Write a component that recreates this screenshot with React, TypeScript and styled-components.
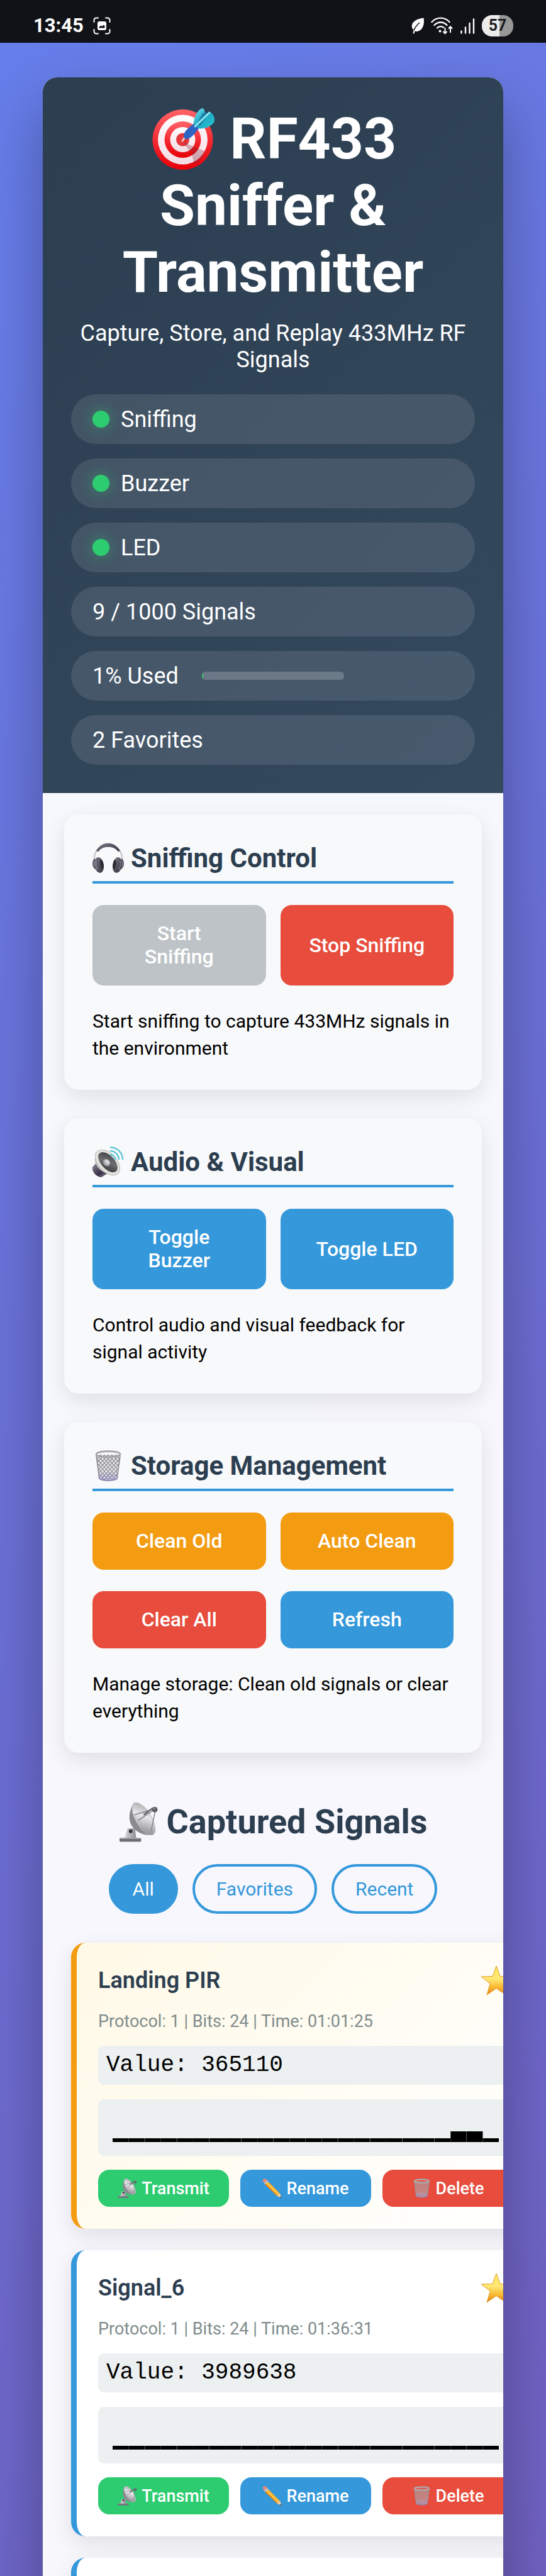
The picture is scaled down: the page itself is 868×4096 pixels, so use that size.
import React, { useId } from "react";
import styled, { createGlobalStyle } from "styled-components";

const GlobalStyle = createGlobalStyle`
  *, *::before, *::after { box-sizing: border-box; }
  body {
    margin: 0;
    font-family: Roboto, sans-serif;
    font-size: 36px;
    color: #000;
  }
  h1, h2, h3, p { margin: 0; }
  button { font-family: inherit; margin: 0; cursor: pointer; }
`;

const tones = {
  blue: "#3498db",
  red: "#e74c3c",
  green: "#2ecc71",
  orange: "#f39c12",
  muted: "#bdc3c7",
};
type Tone = keyof typeof tones;

/* ---------- screen and status bar ---------- */

const Screen = styled.div`
  height: 100vh;
  display: flex;
  flex-direction: column;
  overflow: hidden;
  background: #111217;
`;

const StatusBar = styled.header`
  flex: none;
  height: 68px;
  padding: 14px 52px 0 53px;
  display: flex;
  align-items: center;
  justify-content: space-between;
  color: #fff;
`;

const StatusGroup = styled.div<{ $gap: number }>`
  display: flex;
  align-items: center;
  gap: ${(p) => p.$gap}px;
`;

const Clock = styled.span`
  font-size: 31px;
  line-height: 36px;
  font-weight: 700;
`;

const Battery = styled.span`
  width: 50px;
  height: 34px;
  border-radius: 16px;
  background: linear-gradient(90deg, #ebebeb 57%, #979797 57%);
  color: #1c1c1e;
  font-size: 25px;
  line-height: 34px;
  font-weight: 700;
  text-align: center;
`;

const Scroller = styled.div`
  flex: 1;
  min-height: 0;
  overflow: hidden;
  padding: 55px 68px;
  background: linear-gradient(135deg, #667eea 0%, #764ba2 100%) 0 0 / 100% 7500px no-repeat;
`;

/* ---------- main card ---------- */

const Container = styled.main`
  border-radius: 23px;
  overflow: hidden;
  background: rgba(255, 255, 255, 0.95);
  box-shadow: 0 45px 90px rgba(0, 0, 0, 0.3);
`;

const Hero = styled.div`
  padding: 45px;
  background: linear-gradient(135deg, #2c3e50, #34495e);
  color: #fff;
  text-align: center;
`;

const HeroTitle = styled.h1`
  font-size: 91px;
  line-height: 106px;
  font-weight: 700;
  margin-bottom: 23px;

  svg { vertical-align: -20px; }
`;

const HeroText = styled.p`
  font-size: 36px;
  line-height: 42px;
  margin-bottom: 34px;
`;

const StatusList = styled.ul`
  list-style: none;
  margin: 0;
  padding: 0;
  display: flex;
  flex-direction: column;
  gap: 23px;
`;

const StatusItem = styled.li`
  height: 79px;
  padding: 0 34px;
  border-radius: 45px;
  display: flex;
  align-items: center;
  gap: 18px;
  font-size: 36px;
  line-height: 42px;
  background: rgba(255, 255, 255, 0.1);
`;

const Dot = styled.span`
  width: 27px;
  height: 27px;
  border-radius: 50%;
  background: ${tones.green};
  box-shadow: 0 0 23px rgba(46, 204, 113, 0.5);
`;

const Meter = styled.span`
  width: 226px;
  height: 13px;
  margin-left: 19px;
  border-radius: 6px;
  overflow: hidden;
  background: rgba(255, 255, 255, 0.2);
`;

const MeterFill = styled.span`
  display: block;
  height: 100%;
  background: ${tones.green};
`;

/* ---------- control panels ---------- */

const Panels = styled.div`
  padding: 34px;
  display: flex;
  flex-direction: column;
  gap: 45px;
`;

const Panel = styled.section`
  padding: 45px;
  border-radius: 23px;
  background: #f8f9fa;
  box-shadow: 0 11px 34px rgba(0, 0, 0, 0.1);
`;

const PanelTitle = styled.h2`
  display: flex;
  align-items: center;
  gap: 11px;
  padding-bottom: 11px;
  margin-bottom: 34px;
  border-bottom: 4px solid ${tones.blue};
  color: #2c3e50;
  font-size: 42px;
  line-height: 50px;
  font-weight: 700;
`;

const ButtonGrid = styled.div`
  display: grid;
  grid-template-columns: 1fr 1fr;
  gap: 34px 23px;
  margin-bottom: 35px;
`;

const ActionButton = styled.button<{ $tone: Tone }>`
  border: 0;
  border-radius: 18px;
  padding: 27px 45px;
  background: ${(p) => tones[p.$tone]};
  color: #fff;
  font-size: 32px;
  line-height: 37px;
  font-weight: 500;
`;

const PanelText = styled.p`
  font-size: 30px;
  line-height: 43px;
`;

/* ---------- captured signals ---------- */

const Signals = styled.section`
  padding: 44px 45px;
`;

const SignalsTitle = styled.h2`
  display: flex;
  align-items: center;
  justify-content: center;
  gap: 13px;
  color: #2c3e50;
  font-size: 54px;
  line-height: 64px;
  font-weight: 700;
  margin-bottom: 35px;
`;

const Filters = styled.div`
  display: flex;
  justify-content: center;
  gap: 23px;
  margin-bottom: 46px;
`;

const FilterButton = styled.button<{ $active?: boolean }>`
  padding: 18px 34px;
  border: 4px solid ${tones.blue};
  border-radius: 45px;
  background: ${(p) => (p.$active ? tones.blue : "transparent")};
  color: ${(p) => (p.$active ? "#fff" : tones.blue)};
  font-size: 30px;
  line-height: 35px;
`;

const SignalList = styled.div`
  display: grid;
  grid-template-columns: minmax(737px, 1fr);
  gap: 34px;
`;

const SignalCard = styled.article<{ $favorite?: boolean }>`
  min-height: 455px;
  padding: 34px;
  border-left: 9px solid ${(p) => (p.$favorite ? tones.orange : tones.blue)};
  border-radius: 23px;
  background: ${(p) => (p.$favorite ? "linear-gradient(135deg, #fff9e6, #fff)" : "#fff")};
  box-shadow: 0 11px 34px rgba(0, 0, 0, 0.1);
`;

const SignalHead = styled.div`
  height: 52px;
  display: flex;
  align-items: center;
  justify-content: space-between;
  margin-bottom: 23px;
`;

const SignalName = styled.h3`
  color: #2c3e50;
  font-size: 36px;
  line-height: 42px;
  font-weight: 600;
`;

const StarButton = styled.button`
  display: flex;
  padding: 0;
  border: 0;
  background: none;
`;

const SignalMeta = styled.p`
  color: #7f8c8d;
  font-size: 27px;
  line-height: 32px;
  margin-bottom: 23px;
`;

const SignalValue = styled.div`
  padding: 11px 13px;
  border-radius: 9px;
  background: #ecf0f1;
  font-family: "Liberation Mono", monospace;
  font-size: 36px;
  line-height: 40px;
  margin-bottom: 23px;
`;

const WaveBox = styled.div`
  display: flex;
  padding: 22px 23px;
  border-radius: 9px;
  background: #ecf0f1;
  margin-bottom: 22px;
`;

const SignalActions = styled.div`
  display: grid;
  grid-template-columns: repeat(3, 1fr);
  gap: 18px;
`;

const SmallButton = styled.button<{ $tone: Tone }>`
  display: flex;
  align-items: center;
  justify-content: center;
  gap: 7px;
  height: 59px;
  padding: 0;
  border: 0;
  border-radius: 18px;
  background: ${(p) => tones[p.$tone]};
  color: #fff;
  font-size: 27px;
  line-height: 32px;
  font-weight: 500;
`;

/* ---------- drawings ---------- */

const TargetIcon = () => {
  const id = useId();
  return (
    <svg width="105" height="102" viewBox="0 0 105 102" aria-hidden="true">
      <defs>
        <linearGradient id={id + "r"} x1="0" y1="0" x2="0" y2="1">
          <stop offset="0" stopColor="#ff6468" />
          <stop offset="0.55" stopColor="#f2262e" />
          <stop offset="1" stopColor="#e80008" />
        </linearGradient>
        <linearGradient id={id + "w"} x1="0" y1="0" x2="0" y2="1">
          <stop offset="0" stopColor="#fff" />
          <stop offset="1" stopColor="#f3dbe4" />
        </linearGradient>
        <linearGradient id={id + "f"} x1="0" y1="0" x2="1" y2="1">
          <stop offset="0" stopColor="#7be6ee" />
          <stop offset="0.5" stopColor="#1fa9c4" />
          <stop offset="1" stopColor="#2cc5d6" />
        </linearGradient>
      </defs>
      <circle cx="52.500" cy="52" r="48" fill={`url(#${id}r)`} />
      <circle cx="52.500" cy="52" r="39.500" fill={`url(#${id}w)`} />
      <circle cx="52.500" cy="52" r="29" fill={`url(#${id}r)`} />
      <circle cx="52.500" cy="52" r="20" fill={`url(#${id}w)`} />
      <circle cx="52.500" cy="52" r="10.500" fill="#e5383d" />
      <path d="M54 54 L62 60 L87 70 L84 81 L75 90 L70 91 L67 73 L56 61 Z" fill="#7a2230" opacity="0.3" />
      <path d="M52 54 L58 45" stroke="#f1c9cd" strokeWidth="3" strokeLinecap="round" />
      <path d="M69 34 C69 20 74 6 83 2 C88 2 88 9 87 15 L96 9 C101 9 105 20 102 25 C96 32 86 36 77 34 Z" fill={`url(#${id}f)`} />
      <path d="M84 10 L95 9 L80 30 L74 29 Z" fill="#1a7fa8" />
      <path d="M54 46 C54 40 60 34 70 27 L78 34 C72 42 67 49 60 51 C56 52 54 49 54 46 Z" fill="#2f63c4" />
      <path d="M72 31 L95 9" stroke="#8fe9f2" strokeWidth="3" strokeLinecap="round" />
    </svg>
  );
};

const HeadphonesIcon = () => {
  const id = useId();
  return (
    <svg width="50" height="50" viewBox="0 0 50 50" aria-hidden="true">
      <defs>
        <linearGradient id={id} x1="0" y1="0" x2="1" y2="1">
          <stop offset="0" stopColor="#83808f" />
          <stop offset="0.5" stopColor="#55525f" />
          <stop offset="1" stopColor="#3a3742" />
        </linearGradient>
      </defs>
      <path d="M8 11 C2 18 2 26 4 34 M42 11 C48 18 48 26 46 34" fill="none" stroke="#c9c9cd" strokeWidth="2.500" />
      <path d="M6.500 12.500 C15 -2.500 35 -2.500 43.500 12.500 L41 14 C34 3.500 16 3.500 9 14 Z" fill={`url(#${id})`} stroke="#615f6b" strokeWidth="1" />
      <path d="M4 26 C0 30 0 38 6 42 M46 26 C50 30 50 38 44 42" fill="none" stroke="#5c5966" strokeWidth="2.500" />
      <ellipse cx="10.500" cy="35.500" rx="7.500" ry="12.500" transform="rotate(-10 10.500 35.500)" fill={`url(#${id})`} />
      <ellipse cx="39.500" cy="35.500" rx="7.500" ry="12.500" transform="rotate(10 39.500 35.500)" fill={`url(#${id})`} />
      <ellipse cx="15" cy="34.500" rx="2.500" ry="7.500" transform="rotate(-7 15 34.500)" fill="#2c2a33" />
      <ellipse cx="35" cy="34.500" rx="2.500" ry="7.500" transform="rotate(7 35 34.500)" fill="#2c2a33" />
      <path d="M6 29 C5 33 6 39 8 43 M44 29 C45 33 44 39 42 43" fill="none" stroke="#9a97a6" strokeWidth="1.500" opacity="0.6" />
    </svg>
  );
};

const SpeakerIcon = () => {
  const id = useId();
  return (
    <svg width="50" height="50" viewBox="0 0 50 50" aria-hidden="true">
      <defs>
        <linearGradient id={id + "m"} x1="0" y1="0" x2="1" y2="1">
          <stop offset="0" stopColor="#8b8992" />
          <stop offset="0.6" stopColor="#3a2f49" />
          <stop offset="1" stopColor="#8d8b96" />
        </linearGradient>
        <linearGradient id={id + "c"} x1="0" y1="0" x2="1" y2="1">
          <stop offset="0" stopColor="#3a3a3d" />
          <stop offset="0.5" stopColor="#6f6f73" />
          <stop offset="1" stopColor="#2b2b2e" />
        </linearGradient>
      </defs>
      <path d="M5 27 L0 33 C-1 41 6 48 14 49 L24 43 Z" fill={`url(#${id}m)`} />
      <path d="M5 9 C3 19 3 27 9 34 C15 41 26 45 38 45 Z" fill="#b9b9bb" />
      <ellipse cx="24" cy="25.500" rx="24" ry="14.500" transform="rotate(47 24 25.500)" fill="#e3e3e1" stroke="#bcbcba" strokeWidth="1" />
      <ellipse cx="24.500" cy="25" rx="19.500" ry="10.500" transform="rotate(47 24.500 25)" fill={`url(#${id}c)`} />
      <ellipse cx="22.500" cy="25.500" rx="6" ry="5" transform="rotate(47 22.500 25.500)" fill="#a9a9ab" />
      <ellipse cx="23.500" cy="24.500" rx="4" ry="3" transform="rotate(47 23.500 24.500)" fill="#d5d5d6" />
      <g fill="none" stroke="#62c8d8" strokeWidth="2.500" strokeLinecap="round">
        <path d="M29 13 A 8 8 0 0 1 36 20" />
        <path d="M29 7 A 14 14 0 0 1 42 20" />
        <path d="M29 1.500 A 19 19 0 0 1 48 20" />
      </g>
    </svg>
  );
};

const TrashIcon = ({ size }: { size: number }) => {
  const id = useId();
  const steps = [-36, -30, -24, -18, -12, -6, 0, 6, 12, 18, 24, 30, 36, 42];
  return (
    <svg width={size} height={size} viewBox="0 0 50 50" aria-hidden="true">
      <defs>
        <clipPath id={id}>
          <path d="M6 7 L44 7 L39 45 C35 49 15 49 11 45 Z" />
        </clipPath>
        <linearGradient id={id + "g"} x1="0" y1="0" x2="0" y2="50" gradientUnits="userSpaceOnUse">
          <stop offset="0.1" stopColor="#8c8c90" />
          <stop offset="0.7" stopColor="#9a99a0" />
          <stop offset="1" stopColor="#8983b4" />
        </linearGradient>
      </defs>
      <path d="M6 7 L44 7 L39 45 C35 49 15 49 11 45 Z" fill="#dcdce4" opacity="0.3" />
      <path d="M10 38 C18 35 32 35 40 38 L39 45 C35 49 15 49 11 45 Z" fill="#b6b2d6" opacity="0.4" />
      <g clipPath={`url(#${id})`} stroke={`url(#${id}g)`} strokeWidth="1.500" fill="none">
        {steps.map((x) => (
          <path key={x} d={`M${x} 6 L${x + 40} 50 M${x + 44} 6 L${x + 4} 50`} />
        ))}
      </g>
      <path d="M6 7 L11 45 C15 49 35 49 39 45 L44 7" fill="none" stroke={`url(#${id}g)`} strokeWidth="2" />
      <ellipse cx="25" cy="6.500" rx="19" ry="4.500" fill="none" stroke="#c4c4c8" strokeWidth="3" />
      <ellipse cx="25" cy="6" rx="19.500" ry="5" fill="none" stroke="#77777c" strokeWidth="1" />
    </svg>
  );
};

const DishIcon = ({ size }: { size: number }) => {
  const id = useId();
  return (
    <svg width={size} height={size} viewBox="0 0 64 64" aria-hidden="true">
      <defs>
        <linearGradient id={id + "a"} x1="0" y1="0" x2="1" y2="0.500">
          <stop offset="0" stopColor="#9b9b9f" />
          <stop offset="0.5" stopColor="#e9e9eb" />
          <stop offset="1" stopColor="#9a9a9e" />
        </linearGradient>
        <linearGradient id={id + "b"} x1="0" y1="0" x2="1" y2="0">
          <stop offset="0" stopColor="#d9d9dc" />
          <stop offset="1" stopColor="#8d8d93" />
        </linearGradient>
      </defs>
      <path d="M14 42 L26 42 L28 58 L9 58 Z" fill={`url(#${id}b)`} />
      <rect x="1" y="57.500" width="35" height="6" rx="1.500" fill="#6e6d78" />
      <path d="M1.500 58 H35.500" stroke="#b8b8be" strokeWidth="1.200" />
      <path d="M25 0.500 C17 10 14 27 21 38 C28 49 43 55 56 52 Z" fill="#8a8a8f" />
      <ellipse cx="40" cy="26.500" rx="29.500" ry="12.500" transform="rotate(59 40 26.500)" fill={`url(#${id}a)`} stroke="#b9b9bd" strokeWidth="1" />
      <circle cx="19" cy="46.500" r="3" fill="#34343a" />
      <path d="M25 20 L58 10 M31 29 L58 11 M52 46 L59 12" fill="none" stroke="#808086" strokeWidth="1.500" />
      <path d="M40 20 L55 9" stroke="#606067" strokeWidth="2.500" />
      <circle cx="58" cy="11.500" r="4.500" fill="#5d5c66" />
      <circle cx="57" cy="10" r="1.500" fill="#9c9ba5" />
    </svg>
  );
};

const StarIcon = () => {
  const id = useId();
  return (
    <svg width="52" height="50" viewBox="0 0 52 50" role="img" aria-label="Favorite">
      <defs>
        <linearGradient id={id} x1="0" y1="0" x2="0" y2="1">
          <stop offset="0" stopColor="#ffe95c" />
          <stop offset="0.45" stopColor="#ffe775" />
          <stop offset="0.75" stopColor="#f8b62c" />
          <stop offset="1" stopColor="#e8791f" />
        </linearGradient>
      </defs>
      <path
        d="M25 2 L31 18.500 L49 19 L34.800 30 L40 48 L25 37.500 L10 48 L15.200 30 L1 19 L19 18.500 Z"
        fill={`url(#${id})`}
        stroke="#e0a02a"
        strokeWidth="1"
        strokeLinejoin="round"
      />
    </svg>
  );
};

const PencilIcon = () => (
  <svg width="31" height="31" viewBox="0 0 31 31" aria-hidden="true">
    <path d="M0.500 3 C0.500 1 4 -0.500 6 0.800 L8.500 3.600 L2.800 7 Z" fill="#e98a78" />
    <path d="M2.800 7 L8.500 3.600 L10 5.600 L4 9 Z" fill="#c9ccd2" />
    <path d="M4 9 L10 5.600 L28 23.500 L23 27.500 Z" fill="#f9a825" />
    <path d="M6.500 7.600 L8.200 6.600 L26.500 24.800 L25 26 Z" fill="#ffcf5c" />
    <path d="M4 9 L5.200 8.300 L24 26.800 L23 27.500 Z" fill="#d97a12" />
    <path d="M23 27.500 L28 23.500 L30.800 31 Z" fill="#f0cfa0" />
    <path d="M28 29.800 L29.800 28.200 L30.800 31 Z" fill="#333" />
  </svg>
);

const CaptureIcon = () => (
  <svg width="28" height="28" viewBox="0 0 28 28" aria-hidden="true">
    <path
      d="M1.500 8 V5 A3.500 3.500 0 0 1 5 1.500 H8 M20 1.500 H23 A3.500 3.500 0 0 1 26.500 5 V8 M26.500 20 V23 A3.500 3.500 0 0 1 23 26.500 H20 M8 26.500 H5 A3.500 3.500 0 0 1 1.500 23 V20"
      fill="none"
      stroke="#fff"
      strokeWidth="2"
      strokeLinecap="round"
    />
    <rect x="7" y="7" width="14" height="14" rx="3" fill="#fff" />
    <path d="M9.500 17.500 V16 L12.500 13.500 L14 15 L17 12.500 L18.500 14 V17.500 Z" fill="#111217" />
  </svg>
);

const LeafIcon = () => (
  <svg width="20" height="26" viewBox="0 0 20 26" aria-hidden="true">
    <path d="M19.500 0.500 C21 9 19 19 11 21.500 C8.500 22.300 6.500 22 5.500 21.500 C5 23 4.800 24.300 4.500 25.500 L2.500 25 C2.800 23 3.200 21.500 3.800 20 C-3 14 1 2.500 19.500 0.500 Z" fill="#fff" />
    <path d="M4 20 C6 15 9 11.500 13 8" fill="none" stroke="#111217" strokeWidth="1.600" />
  </svg>
);

const WifiIcon = () => (
  <svg width="36" height="28" viewBox="0 0 36 28" aria-hidden="true">
    <g fill="none" stroke="#fff" strokeWidth="2.400" strokeLinecap="round">
      <path d="M1.500 8 C9 -0.500 22 -0.500 29.500 8" />
      <path d="M5.500 13 C11 7 20 7 25.500 13" />
      <path d="M10 17.500 C13 14.500 17.500 14.500 20 16.500" />
    </g>
    <circle cx="14.500" cy="22.500" r="2" fill="#fff" />
    <path d="M22.500 17 V26 M19.500 23 L22.500 26.300 L25.500 23 M31 25 V15.500 M28 18.500 L31 15.200 L34 18.500" fill="none" stroke="#fff" strokeWidth="2" />
  </svg>
);

const CellIcon = () => (
  <svg width="23" height="25" viewBox="0 0 23 25" aria-hidden="true">
    <path d="M1.500 20.500 V23.500 M8 14.500 V23.500 M14.500 8 V23.500 M21 1.500 V23.500" stroke="#fff" strokeWidth="2.400" strokeLinecap="round" />
  </svg>
);

const BAR = 25.6;

const Waveform = ({ levels }: { levels: number[] }) => (
  <svg width="614" height="46" viewBox="0 0 614.400 46" preserveAspectRatio="none" role="img" aria-label="Signal waveform">
    {levels.map((h, i) => (
      <rect key={i} x={i * BAR} y={46 - h} width={BAR} height={h} fill="#000" />
    ))}
    {levels.map((h, i) =>
      i > 0 && i % 2 === 0 ? <rect key={i} x={i * BAR - 0.5} y={46 - h} width="0.500" height={h} fill="#8a8c8d" /> : null
    )}
  </svg>
);

/* ---------- page ---------- */

const low = 6;
const high = 17;
const flat = Array.from({ length: 24 }, () => low);

const signals = [
  {
    name: "Landing PIR",
    meta: "Protocol: 1 | Bits: 24 | Time: 01:01:25",
    value: "365110",
    favorite: true,
    levels: flat.map((v, i) => (i === 21 || i === 22 ? high : v)),
  },
  {
    name: "Signal_6",
    meta: "Protocol: 1 | Bits: 24 | Time: 01:36:31",
    value: "3989638",
    favorite: false,
    levels: flat,
  },
];

export default function App() {
  return (
    <Screen>
      <GlobalStyle />
      <StatusBar>
        <StatusGroup $gap={15}>
          <Clock>13:45</Clock>
          <CaptureIcon />
        </StatusGroup>
        <StatusGroup $gap={11}>
          <LeafIcon />
          <WifiIcon />
          <CellIcon />
          <Battery>57</Battery>
        </StatusGroup>
      </StatusBar>
      <Scroller>
        <Container>
          <Hero>
            <HeroTitle>
              <TargetIcon /> RF433 Sniffer &amp; Transmitter
            </HeroTitle>
            <HeroText>Capture, Store, and Replay 433MHz RF Signals</HeroText>
            <StatusList>
              <StatusItem><Dot />Sniffing</StatusItem>
              <StatusItem><Dot />Buzzer</StatusItem>
              <StatusItem><Dot />LED</StatusItem>
              <StatusItem>9 / 1000 Signals</StatusItem>
              <StatusItem>
                1% Used
                <Meter>
                  <MeterFill style={{ width: `${(9 / 1000) * 100}%` }} />
                </Meter>
              </StatusItem>
              <StatusItem>2 Favorites</StatusItem>
            </StatusList>
          </Hero>

          <Panels>
            <Panel>
              <PanelTitle><HeadphonesIcon />Sniffing Control</PanelTitle>
              <ButtonGrid>
                <ActionButton $tone="muted">Start Sniffing</ActionButton>
                <ActionButton $tone="red">Stop Sniffing</ActionButton>
              </ButtonGrid>
              <PanelText>Start sniffing to capture 433MHz signals in the environment</PanelText>
            </Panel>
            <Panel>
              <PanelTitle><SpeakerIcon />Audio &amp; Visual</PanelTitle>
              <ButtonGrid>
                <ActionButton $tone="blue">Toggle Buzzer</ActionButton>
                <ActionButton $tone="blue">Toggle LED</ActionButton>
              </ButtonGrid>
              <PanelText>Control audio and visual feedback for signal activity</PanelText>
            </Panel>
            <Panel>
              <PanelTitle><TrashIcon size={50} />Storage Management</PanelTitle>
              <ButtonGrid>
                <ActionButton $tone="orange">Clean Old</ActionButton>
                <ActionButton $tone="orange">Auto Clean</ActionButton>
                <ActionButton $tone="red">Clear All</ActionButton>
                <ActionButton $tone="blue">Refresh</ActionButton>
              </ButtonGrid>
              <PanelText>Manage storage: Clean old signals or clear everything</PanelText>
            </Panel>
          </Panels>

          <Signals>
            <SignalsTitle><DishIcon size={63} />Captured Signals</SignalsTitle>
            <Filters>
              <FilterButton $active>All</FilterButton>
              <FilterButton>Favorites</FilterButton>
              <FilterButton>Recent</FilterButton>
            </Filters>
            <SignalList>
              {signals.map((s) => (
                <SignalCard key={s.name} $favorite={s.favorite}>
                  <SignalHead>
                    <SignalName>{s.name}</SignalName>
                    <StarButton><StarIcon /></StarButton>
                  </SignalHead>
                  <SignalMeta>{s.meta}</SignalMeta>
                  <SignalValue>Value: {s.value}</SignalValue>
                  <WaveBox><Waveform levels={s.levels} /></WaveBox>
                  <SignalActions>
                    <SmallButton $tone="green"><DishIcon size={31} />Transmit</SmallButton>
                    <SmallButton $tone="blue"><PencilIcon />Rename</SmallButton>
                    <SmallButton $tone="red"><TrashIcon size={31} />Delete</SmallButton>
                  </SignalActions>
                </SignalCard>
              ))}
              <SignalCard />
            </SignalList>
          </Signals>
        </Container>
      </Scroller>
    </Screen>
  );
}
